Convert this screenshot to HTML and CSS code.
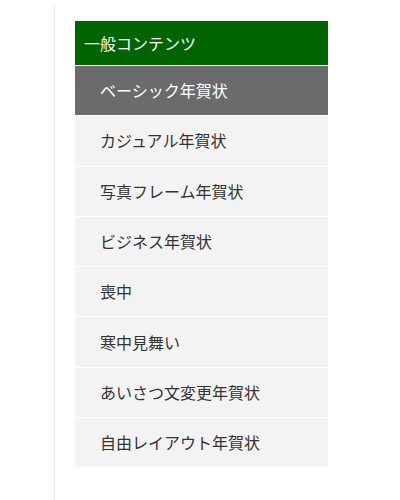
FILE: index.html
```html
<!DOCTYPE html>
<html lang="ja">
<head>
<meta charset="utf-8">
<link rel="stylesheet" href="styles.css">
</head>
<body>
<div class="sidebar">
  <nav class="menu">
    <div class="menu-title">一般コンテンツ</div>
    <ul class="menu-list">
      <li class="menu-item active">ベーシック年賀状</li>
      <li class="menu-item">カジュアル年賀状</li>
      <li class="menu-item">写真フレーム年賀状</li>
      <li class="menu-item">ビジネス年賀状</li>
      <li class="menu-item">喪中</li>
      <li class="menu-item">寒中見舞い</li>
      <li class="menu-item">あいさつ文変更年賀状</li>
      <li class="menu-item">自由レイアウト年賀状</li>
    </ul>
  </nav>
</div>
</body>
</html>
```

FILE: styles.css
```css
html, body {
  margin: 0;
  padding: 0;
  background: #ffffff;
}
body {
  font-family: "Noto Sans CJK JP", "Noto Sans", sans-serif;
}
.sidebar {
  margin-left: 54px;
  margin-top: 4px;
  border-left: 1px solid #ececec;
  padding: 17px 0 0 20px;
  min-height: calc(100vh - 4px);
  box-sizing: border-box;
}
.menu {
  width: 253px;
}
.menu-title {
  background: #006400;
  color: #ffffff;
  font-size: 16px;
  height: 44px;
  display: flex;
  align-items: center;
  padding-left: 9px;
}
.menu-list {
  list-style: none;
  margin: 0;
  padding: 0;
}
.menu-item {
  border-top: 1px solid #ffffff;
  background: #f3f3f3;
  color: #333333;
  font-size: 16px;
  height: 49.3px;
  display: flex;
  align-items: center;
  padding-left: 25px;
  padding-bottom: 1px;
  box-sizing: border-box;
  height: 50.3px;
}
.menu-item.active {
  background: #6b6b6b;
  color: #ffffff;
}
```
